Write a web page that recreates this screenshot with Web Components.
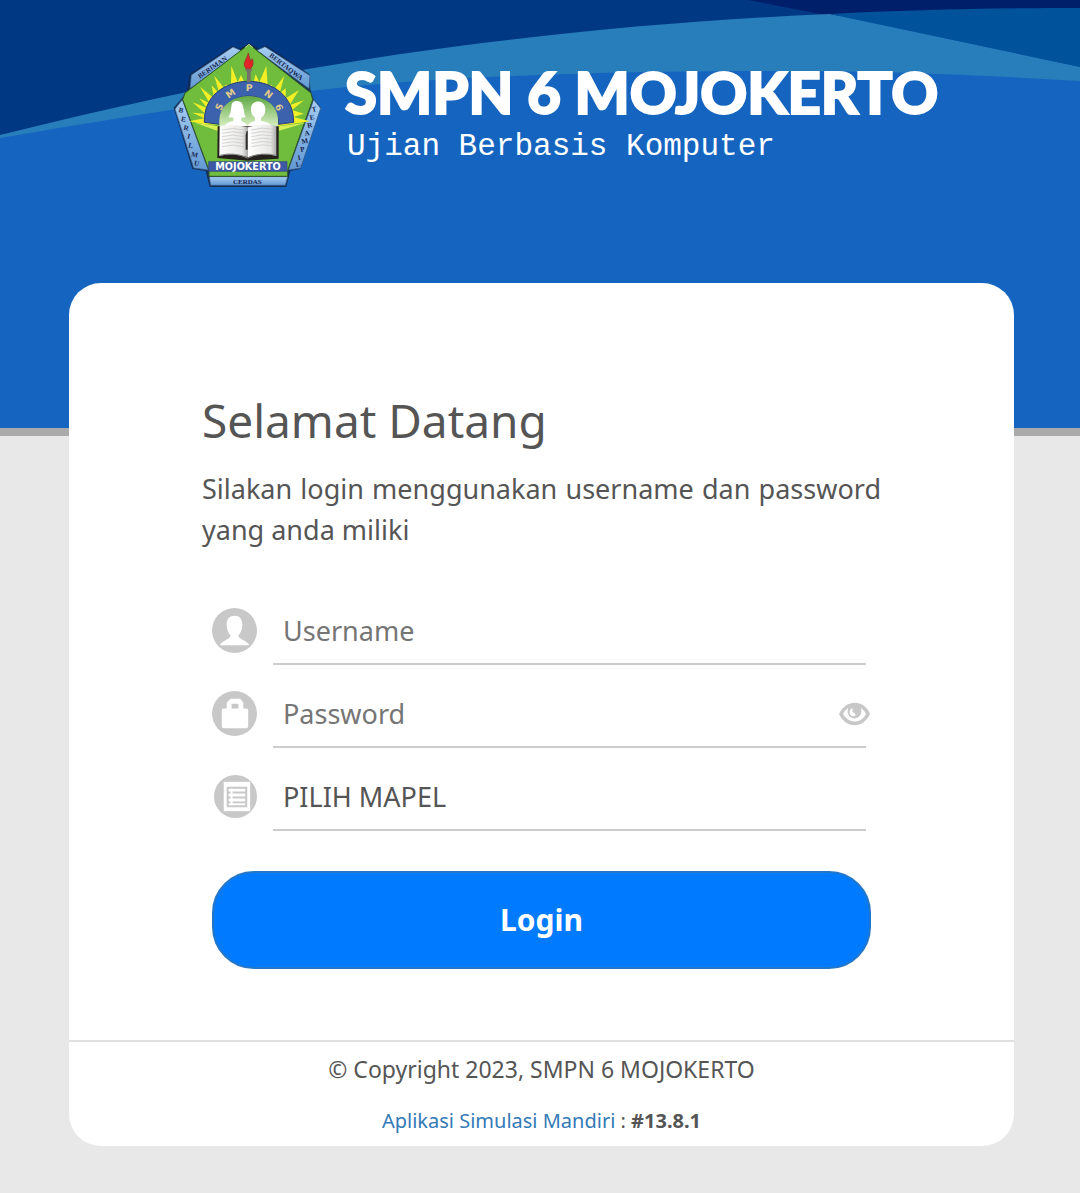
<!DOCTYPE html>
<html lang="id">
<head>
<meta charset="utf-8">
<meta name="viewport" content="width=device-width, initial-scale=1">
<title>SMPN 6 MOJOKERTO</title>
<style>
  html {
    background: #e8e8e8;
  }

  body {
    margin: 0;
    color: #555;
    font-family: "Noto Sans", "Open Sans", sans-serif;
  }
</style>
</head>
<body>

<exam-header>
  <school-logo slot="logo"></school-logo>
  <span slot="name">SMPN 6 MOJOKERTO</span>
  <span slot="tagline">Ujian Berbasis Komputer</span>
</exam-header>

<login-card>
  <span slot="title">Selamat Datang</span>
  <span slot="intro">Silakan login menggunakan username dan password yang anda miliki</span>
  <login-form></login-form>
  <page-footer slot="footer"></page-footer>
</login-card>

<template id="exam-header">
  <style>
    :host {
      display: block;
      position: relative;
      min-height: 428px;
      border-bottom: 8px solid #aaa;
      background: #1565c0;
      color: #fff;
    }
    .waves {
      position: absolute;
      top: 0;
      left: 0;
      width: 100%;
      height: 200px;
    }
    .brand {
      position: relative;
      display: flex;
      gap: 10px;
      padding: 35px 24px 0 165px;
    }
    .text {
      padding-top: 24px;
    }
    h1 {
      margin: 0;
      font: 900 58px/66px Lato, sans-serif;
      -webkit-text-stroke: 2px #fff;
    }
    p {
      margin: 2px 0 0 2px;
      font: 31px/40px "Liberation Mono", monospace;
    }
  </style>
  <svg class="waves" viewBox="0 0 1080 200" preserveAspectRatio="none" aria-hidden="true">
    <path fill="#003884" d="M0 0H1080V14L830 15C690 21 560 33 415 53C300 70 180 91 0 136Z"/>
    <path fill="#001f6b" d="M748 0H1080V12L830 16Z"/>
    <path fill="#287ebb" d="M0 135C180 90 300 69 415 52C560 32 690 20 830 14L1080 67V81C980 75 890 71 780 71C600 71 440 76 310 91C200 104 100 121 0 138Z"/>
    <path fill="#00529b" d="M830 14C910 10 990 8 1080 8V67Z"/>
  </svg>
  <header class="brand">
    <slot name="logo"></slot>
    <div class="text">
      <h1><slot name="name"></slot></h1>
      <p><slot name="tagline"></slot></p>
    </div>
  </header>
</template>

<template id="school-logo">
  <style>
    :host {
      display: block;
      flex: none;
      width: 170px;
      height: 160px;
    }
    svg {
      display: block;
      width: 100%;
      height: 100%;
    }
    text {
      font-family: "Liberation Serif", serif;
      font-weight: bold;
      font-size: 21px;
      fill: #16264f;
    }
    .sans {
      font-family: "DejaVu Sans", sans-serif;
    }
  </style>
  <svg viewBox="0 0 510 480" role="img" aria-label="Logo SMPN 6 Mojokerto">
    <defs>
      <linearGradient id="panel" x1="0" y1="0" x2="0" y2="1">
        <stop offset="0" stop-color="#a6cdf2"/>
        <stop offset="1" stop-color="#6399d3"/>
      </linearGradient>
      <linearGradient id="page" x1="0" y1="0" x2="1" y2="0">
        <stop offset="0" stop-color="#fff"/>
        <stop offset=".8" stop-color="#e6e6e4"/>
        <stop offset="1" stop-color="#aaa"/>
      </linearGradient>
      <linearGradient id="arch" x1="0" y1="0" x2="0" y2="1">
        <stop offset="0" stop-color="#5fa944"/>
        <stop offset="1" stop-color="#d9efc4"/>
      </linearGradient>
      <path id="arc" d="M163 257A89 89 0 0 1 341 257"/>
    </defs>

    <!-- outer plates -->
    <path fill="#15243f" opacity=".85" d="M74 118L202 33L225 41L252 25L283 41L302 31L434 118L436 163L444 190L468 218L407 401L376 408L364 456L134 456L122 408L82 402L26 218L51 190L68 163Z"/>
    <g fill="url(#panel)" stroke="#385f91" stroke-width="2">
      <path d="M79 120L204 36L229 47L75 161Z"/>
      <path d="M276 46L300 35L435 122L432 161Z"/>
      <path d="M52 194L30 222L86 399L130 405Z"/>
      <path d="M446 194L467 220L407 399L370 405Z"/>
      <path d="M133 425H368L361 451H137Z"/>
    </g>
    <path fill="#70bd3d" stroke="#31552c" stroke-width="3" d="M252 28L438 174L443 194L368 406L368 424H132V406L53 194L60 174Z"/>
    <path fill="none" stroke="#b4db8c" stroke-width="3" d="M240 38L252 28L264 38"/>

    <!-- sun rays -->
    <path fill="#f4ee27" d="M120 268L72 259L118 250L82 233L121 236L83 202L126 219L103 190L134 205L105 155L147 190L140 151L163 176L148 122L179 161L180 150L198 149L199 92L218 141L228 120L238 142H265L272 118L283 142L304 92L308 150L320 150L328 163L358 122L344 175L362 160L362 190L402 165L374 210L417 196L381 225L417 236L386 246L435 259L340 273Z"/>
    <path fill="#d9ed55" d="M90 263L161 274V289ZM423 263L342 274V287Z"/>
    <path fill="#3c62ad" stroke="#263f78" stroke-width="3" d="M118 262C114 98 387 98 386 262L340 268C340 155 164 155 164 268Z"/>
    <path fill="url(#arch)" d="M163 276V254C167 160 336 160 339 254V276Z"/>

    <!-- torch -->
    <path fill="#776f6a" d="M239 102H263L257 112V141H246V112Z"/>
    <path fill="#e42328" stroke="#8b302a" stroke-width="2" d="M243 101C230 84 244 76 250 54C252 68 257 72 256 79L262 71C268 86 261 97 257 101Z"/>

    <!-- pupils -->
    <path fill="#fff" d="M190 247C201 231 197 211 202 204C210 194 231 198 233 210C238 225 237 239 242 247L229 248V259C241 264 248 268 251 283H178C178 267 188 261 205 258V248Z"/>
    <path fill="#fff" d="M270 248C260 240 258 232 258 224C256 192 302 191 301 224C301 236 296 243 288 249V258C310 261 320 268 323 283H245C246 270 254 262 270 258Z"/>

    <!-- book -->
    <path fill="#25221d" d="M158 274H341V371L249 377L157 369Z"/>
    <path fill="url(#page)" d="M164 274C189 267 220 269 249 277V367C220 355 190 355 163 363Z"/>
    <path fill="url(#page)" d="M249 277C281 267 309 267 334 273V363C306 355 277 354 249 367Z"/>
    <path fill="none" stroke="#c4c3c1" stroke-width="2" d="M171 285Q202 276 237 285M171 295Q202 286 237 295M171 305Q202 296 237 305M171 315Q202 306 237 315M171 325Q202 316 237 325M171 335Q202 326 237 335M259 285Q292 275 326 283M259 295Q292 285 326 293M259 305Q292 295 326 303M259 315Q292 305 326 313M259 325Q292 315 326 323M259 335Q292 325 326 333"/>
    <path fill="#302e2c" d="M245 288H248V344H242V301Z"/>
    <path fill="none" stroke="#8a8a8a" stroke-width="3" d="M164 361Q207 350 248 369Q287 350 334 361"/>

    <path fill="#3e5aa6" stroke="#2d437c" stroke-width="2" d="M131 380H366V409H131Z"/>
    <text class="sans" x="249" y="405" text-anchor="middle" style="font-size: 29px; fill: #fff">MOJOKERTO</text>
    <text x="247" y="446" text-anchor="middle">CERDAS</text>
    <text class="sans" text-anchor="middle" style="font-size: 28px; fill: #e3cc88">
      <textPath href="#arc" startOffset="39">S</textPath>
      <textPath href="#arc" startOffset="87">M</textPath>
      <textPath href="#arc" startOffset="140">P</textPath>
      <textPath href="#arc" startOffset="196">N</textPath>
      <textPath href="#arc" startOffset="242">6</textPath>
    </text>
    <text transform="translate(104 131) rotate(-34)">BERIMAN</text>
    <text transform="translate(311 64) rotate(37)">BERTAQWA</text>
    <text x="40 47 55 66 69 78 86" y="231 258 284 310 337 364 390" rotate="12">BERILMU</text>
    <text x="442 436 428 420 411 407 400 394" y="231 255 279 303 327 351 376 396" rotate="-12">TERAMPIL</text>
  </svg>
</template>

<template id="login-card">
  <style>
    :host {
      display: block;
      position: relative;
      margin: -153px 66px 46px 69px;
      border-radius: 32px;
      background: #fff;
      overflow: hidden;
    }
    main {
      padding: 107px 133px 71px;
    }
    h2 {
      margin: 0;
      font-weight: normal;
      font-size: 46px;
      line-height: 60px;
    }
    p {
      margin: 18px 0 48px;
      font-size: 27px;
      line-height: 41px;
      text-align: justify;
    }
  </style>
  <main>
    <h2><slot name="title"></slot></h2>
    <p><slot name="intro"></slot></p>
    <slot></slot>
  </main>
  <slot name="footer"></slot>
</template>

<template id="login-form">
  <style>
    :host {
      display: block;
      padding: 0 10px;
    }
    form {
      display: flex;
      flex-direction: column;
      gap: 16px;
    }
    .field {
      position: relative;
      display: grid;
      grid-template-columns: 45px 1fr;
      gap: 16px;
      align-items: center;
      padding-right: 5px;
    }
    .icon {
      display: block;
      padding-bottom: 2px;
    }
    .icon svg {
      display: block;
    }
    input, select {
      box-sizing: border-box;
      width: 100%;
      height: 67px;
      margin: 0;
      padding: 0 10px;
      border: 0;
      border-bottom: 2px solid #ccc;
      border-radius: 0;
      outline: 0;
      background: transparent;
      color: #555;
      font: inherit;
      font-size: 27px;
      appearance: none;
    }
    input::placeholder {
      color: #757575;
      opacity: 1;
    }
    input[name="password"] {
      padding-right: 48px;
    }
    input:focus, select:focus {
      border-bottom-color: #007bff;
    }
    .peek {
      position: absolute;
      top: 19px;
      right: 0;
      width: 33px;
      height: 28px;
      padding: 0;
      border: 0;
      background: none;
      cursor: pointer;
    }
    .peek svg {
      display: block;
    }
    .submit {
      height: 98px;
      margin-top: 24px;
      padding: 0 0 2px;
      border: 2px solid #2377c8;
      border-radius: 42px;
      background: #007bff;
      color: #fff;
      font: inherit;
      font-weight: bold;
      font-size: 30px;
      cursor: pointer;
    }
  </style>
  <form>
    <div class="field">
      <label class="icon" for="username" aria-label="Username">
        <svg width="45" height="45" viewBox="0 0 46 46" aria-hidden="true">
          <circle cx="23" cy="23" r="23" fill="#c8c8c8"/>
          <path fill="#fff" d="M23 8C28 8 31 11 31 17C31 22 29 26 27 28C27 32 36 33 38 38H8C10 33 19 32 19 28C17 26 15 22 15 17C15 11 18 8 23 8Z"/>
        </svg>
      </label>
      <input id="username" name="username" type="text" placeholder="Username" autocomplete="username">
    </div>
    <div class="field">
      <label class="icon" for="password" aria-label="Password">
        <svg width="45" height="45" viewBox="0 0 46 46" aria-hidden="true">
          <circle cx="23" cy="23" r="23" fill="#c8c8c8"/>
          <path fill="#fff" fill-rule="evenodd" d="M15 18V12L19 8H29L32 12V18H35Q37 18 37 20V36Q37 38 35 38H12Q10 38 10 36V20Q10 18 12 18ZM20 18H27V13H20Z"/>
        </svg>
      </label>
      <input id="password" name="password" type="password" placeholder="Password" autocomplete="current-password">
      <button class="peek" type="button" aria-label="Tampilkan password">
        <svg width="33" height="28" viewBox="0 0 33 28" aria-hidden="true">
          <path fill="#c8c8c8" d="M1 14C8 -1 26 -1 32 14C25 29 8 29 1 14Z"/>
          <path fill="#fff" d="M5 14Q7 10 10 8C7 22 26 22 23 8Q26 10 28 14C23 24 11 24 5 14Z"/>
          <path fill="#fff" d="M15 8C10 9 11 16 15 16C19 16 18 14 16 13C14 12 14 10 15 8Z"/>
        </svg>
      </button>
    </div>
    <div class="field">
      <label class="icon" for="mapel" aria-label="Mata pelajaran">
        <svg width="45" height="45" viewBox="0 0 46 46" aria-hidden="true">
          <circle cx="24" cy="23" r="22" fill="#c8c8c8"/>
          <path fill="#fff" d="M12 8H39V38H12Z"/>
          <path fill="none" stroke="#c8c8c8" stroke-width="2" d="M16 14H35V33H16ZM16 19H35M16 24H35M16 29H35"/>
          <path stroke="#fff" stroke-width="2" d="M20 15V32"/>
        </svg>
      </label>
      <select id="mapel" name="mapel">
        <option>PILIH MAPEL</option>
      </select>
    </div>
    <button class="submit" type="submit">Login</button>
  </form>
</template>

<template id="page-footer">
  <style>
    :host {
      display: block;
      padding: 10px 16px 11px;
      border-top: 2px solid #e0e0e0;
      text-align: center;
    }
    p {
      margin: 0;
      font-size: 23px;
      line-height: 34px;
    }
    .app {
      margin-top: 21px;
      font-size: 20px;
      line-height: 28px;
    }
    a {
      color: #337ab7;
      text-decoration: none;
    }
  </style>
  <footer>
    <p>© Copyright 2023, SMPN 6 MOJOKERTO</p>
    <p class="app"><a href="#">Aplikasi Simulasi Mandiri</a> : <strong>#13.8.1</strong></p>
  </footer>
</template>

<script>
  class TemplateElement extends HTMLElement {
    connectedCallback() {
      if (this.shadowRoot) {
        return;
      }
      const template = document.getElementById(this.localName);
      this.attachShadow({mode: 'open'});
      this.shadowRoot.appendChild(template.content.cloneNode(true));
      this.ready();
    }

    ready() {}
  }

  class ExamHeader extends TemplateElement {}
  class SchoolLogo extends TemplateElement {}
  class LoginCard extends TemplateElement {}
  class PageFooter extends TemplateElement {}

  class LoginForm extends TemplateElement {
    ready() {
      const password = this.shadowRoot.getElementById('password');

      this.shadowRoot.querySelector('.peek').addEventListener('click', () => {
        password.type = password.type === 'password' ? 'text' : 'password';
      });

      this.shadowRoot.querySelector('form').addEventListener('submit', e => {
        e.preventDefault();
      });
    }
  }

  window.customElements.define('exam-header', ExamHeader);
  window.customElements.define('school-logo', SchoolLogo);
  window.customElements.define('login-card', LoginCard);
  window.customElements.define('login-form', LoginForm);
  window.customElements.define('page-footer', PageFooter);
</script>
</body>
</html>
